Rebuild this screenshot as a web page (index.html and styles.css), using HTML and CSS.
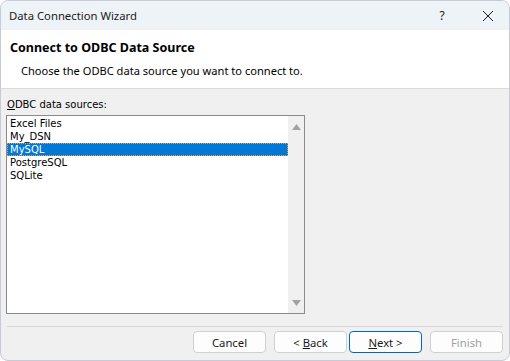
FILE: index.html
```html
<!DOCTYPE html>
<html>
<head>
<meta charset="utf-8">
<link rel="stylesheet" href="styles.css">
</head>
<body>
<div class="window">
  <div class="titlebar">
    <span class="title">Data Connection Wizard</span>
    <span class="help">?</span>
    <span class="close">
      <svg width="12" height="12" viewBox="0 0 12 12"><path d="M1 1 L11 11 M11 1 L1 11" stroke="#1a1a1a" stroke-width="1"/></svg>
    </span>
  </div>
  <div class="header">
    <div class="heading">Connect to ODBC Data Source</div>
    <div class="subheading">Choose the ODBC data source you want to connect to.</div>
  </div>
  <div class="content">
    <div class="label"><u>O</u>DBC data sources:</div>
    <div class="listbox">
      <div class="items">
        <div class="item">Excel Files</div>
        <div class="item">My_DSN</div>
        <div class="item selected">MySQL</div>
        <div class="item">PostgreSQL</div>
        <div class="item">SQLite</div>
      </div>
      <div class="scrollbar">
        <svg width="9" height="6" viewBox="0 0 9 6"><path d="M4.5 0 L9 6 L0 6 Z" fill="#a3a3a3"/></svg>
        <svg width="9" height="6" viewBox="0 0 9 6"><path d="M0 0 L9 0 L4.5 6 Z" fill="#a3a3a3"/></svg>
      </div>
    </div>
  </div>
  <div class="separator"></div>
  <div class="buttons">
    <div class="btn"><span>Cancel</span></div>
    <div class="btn wide-gap"><span>&lt; <u>B</u>ack</span></div>
    <div class="btn default"><span><u>N</u>ext &gt;</span></div>
    <div class="btn disabled wide-gap"><span>Finish</span></div>
  </div>
</div>
</body>
</html>
```
FILE: styles.css
```css
html, body {
  margin: 0;
  padding: 0;
  background: #ffffff;
}
.window {
  width: 510px;
  height: 361px;
  box-sizing: border-box;
  border: 1px solid #c8cad8;
  border-radius: 8px;
  overflow: hidden;
  background: #f0f0f0;
  font-family: "Noto Sans", sans-serif;
  font-size: 11.3px;
  color: #000;
  display: flex;
  flex-direction: column;
}
.titlebar {
  height: 29px;
  flex: none;
  background: #eef3f8;
  display: flex;
  align-items: center;
  padding-left: 8px;
}
.title {
  flex: 1;
  color: #1a1a1a;
}
.help {
  width: 10px;
  text-align: center;
  margin-right: 35px;
  color: #1a1a1a;
  font-size: 12px;
}
.close {
  width: 12px;
  height: 12px;
  margin-right: 15px;
  display: flex;
}
.header {
  background: #ffffff;
  border-bottom: 1px solid #dadada;
  padding: 10px 9px 9px 9px;
  flex: none;
}
.heading {
  font-weight: bold;
  line-height: 16px;
  font-size: 12.5px;
}
.subheading {
  margin-top: 7px;
  padding-left: 11px;
  line-height: 16px;
  font-size: 11.1px;
}
.content {
  padding: 8px 0 0 5px;
  font-family: "DejaVu Sans", sans-serif;
  font-size: 10px;
  flex: none;
}
.label {
  line-height: 16px;
  padding-left: 1px;
  margin-bottom: 2px;
}
.listbox {
  width: 299px;
  height: 199px;
  box-sizing: border-box;
  border: 1px solid #868a91;
  background: #ffffff;
  display: flex;
}
.items {
  flex: 1;
  padding-top: 1px;
}
.item {
  height: 13px;
  line-height: 13px;
  padding-left: 3px;
  box-sizing: border-box;
}
.item.selected {
  background: #0078d7;
  color: #ffffff;
  outline: 1px dotted #f0a040;
  outline-offset: -1px;
}
.scrollbar {
  width: 16px;
  background: #f0f0f0;
  display: flex;
  flex-direction: column;
  justify-content: space-between;
  align-items: center;
  padding: 8px 0 7px;
}
.separator {
  height: 1px;
  background: #d9d9d9;
  margin: 12px 6px 0 6px;
  flex: none;
}
.buttons {
  display: flex;
  justify-content: flex-end;
  padding: 4px 6px 0 0;
}
.btn {
  width: 73px;
  height: 22px;
  box-sizing: border-box;
  border: 1px solid #d0d0d0;
  border-radius: 4px;
  background: #fdfdfd;
  display: flex;
  align-items: center;
  justify-content: center;
  margin-left: 2px;
  color: #1a1a1a;
}
.btn.wide-gap {
  margin-left: 8px;
}
.btn.default {
  border-color: #0067c0;
}
.btn.disabled {
  color: #a0a0a0;
}
```
